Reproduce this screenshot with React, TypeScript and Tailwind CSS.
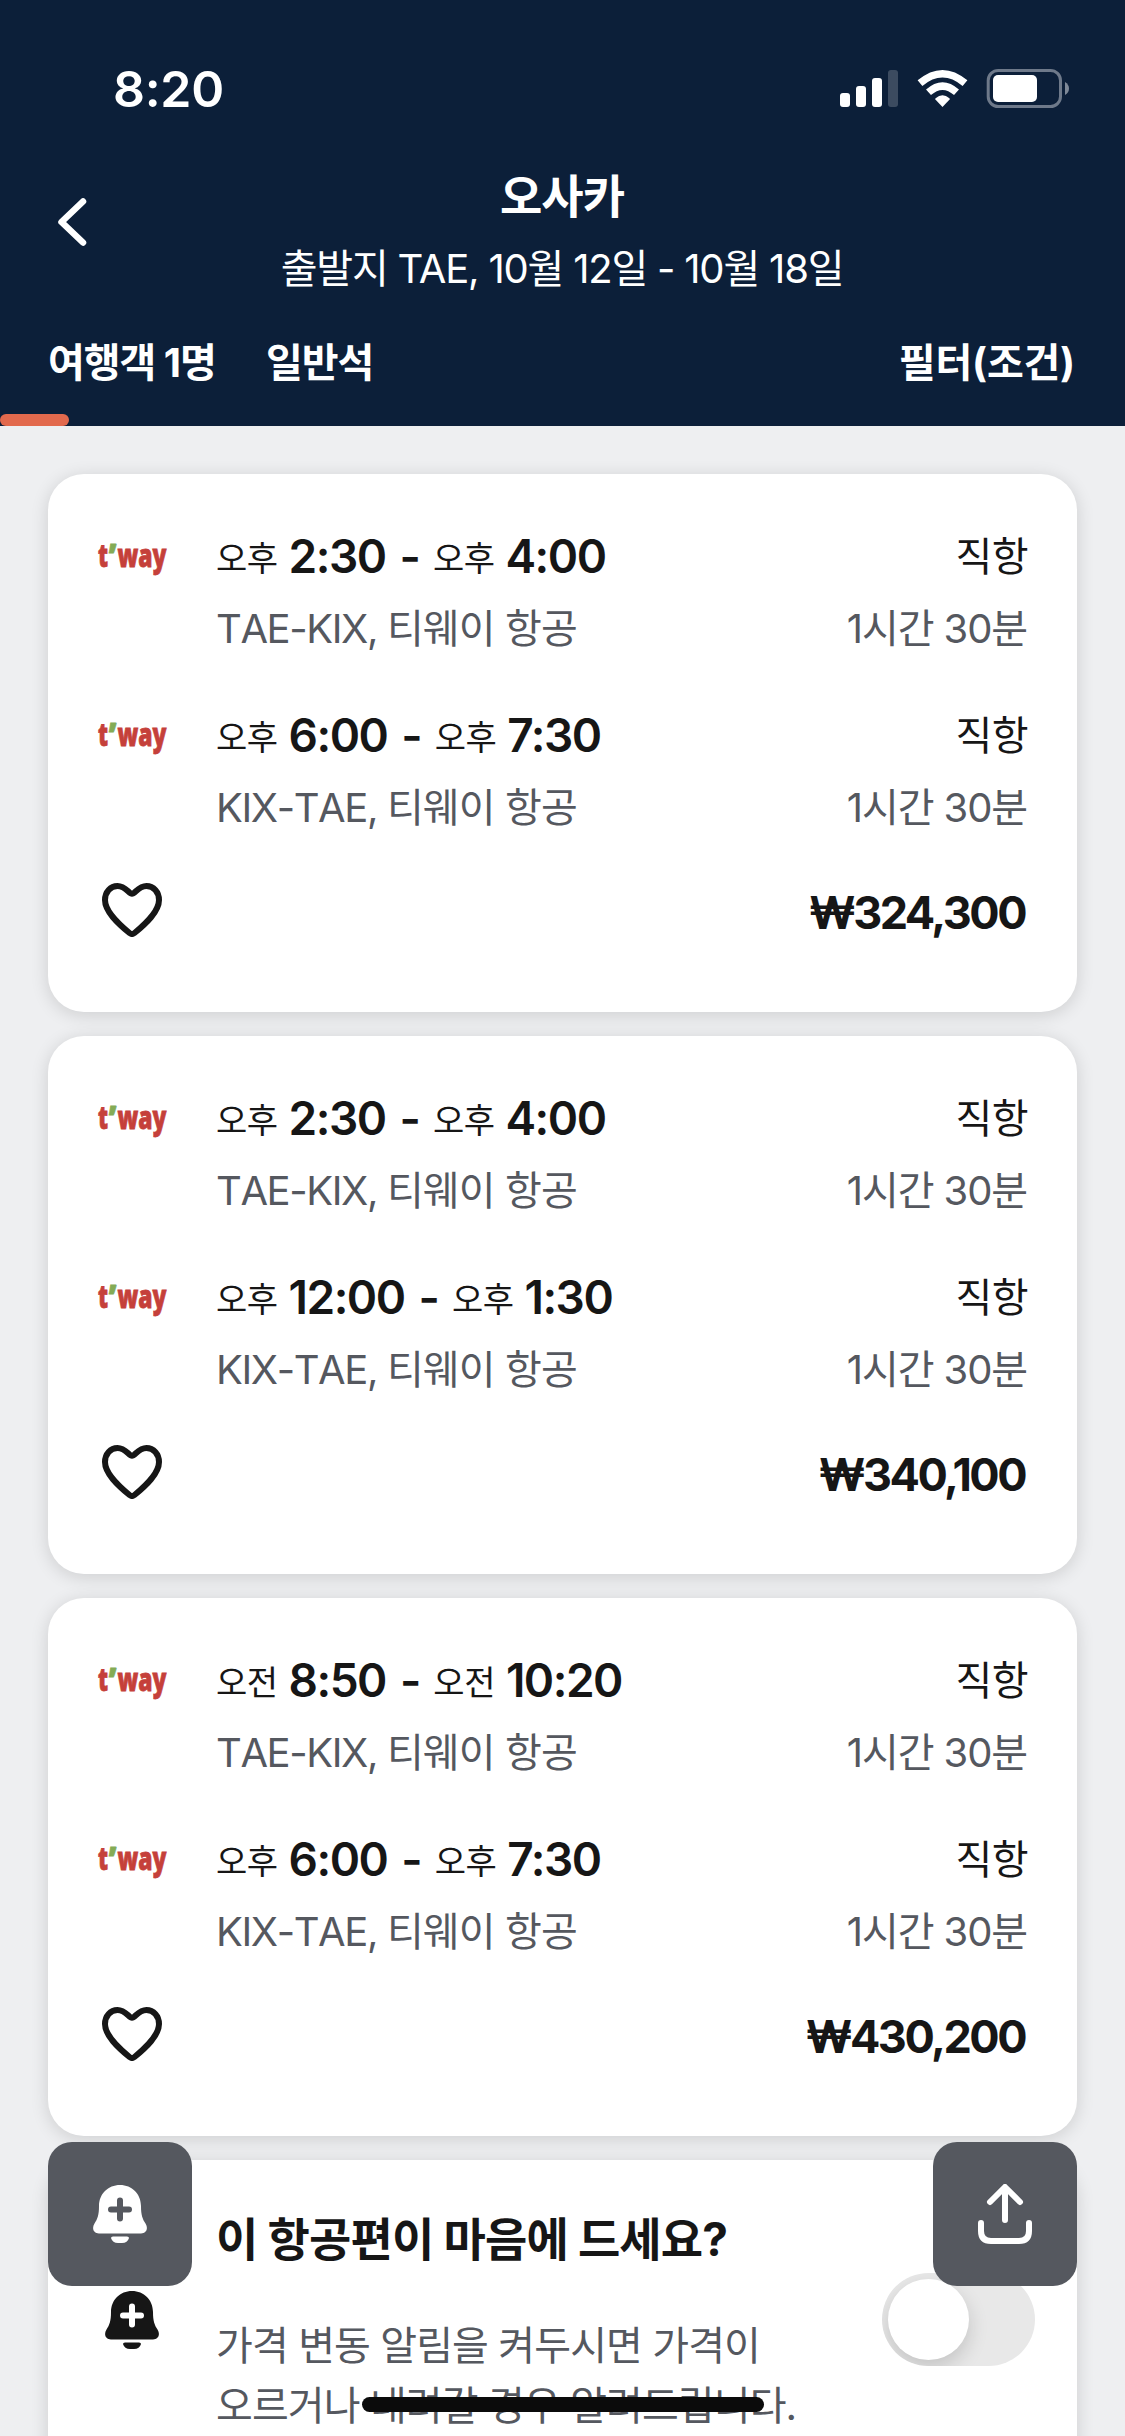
import React, { useState } from 'react';

interface FlightTime {
  period: string;
  time: string;
}

interface Leg {
  depart: FlightTime;
  arrive: FlightTime;
  route: string;
  airline: string;
  stops: string;
  duration: string;
}

interface Flight {
  id: number;
  legs: Leg[];
  price: string;
}

const makeLeg = (route: string, depart: FlightTime, arrive: FlightTime): Leg => ({
  depart,
  arrive,
  route,
  airline: '티웨이 항공',
  stops: '직항',
  duration: '1시간 30분',
});

const pm = (time: string): FlightTime => ({ period: '오후', time });
const am = (time: string): FlightTime => ({ period: '오전', time });

const flights: Flight[] = [
  {
    id: 1,
    legs: [makeLeg('TAE-KIX', pm('2:30'), pm('4:00')), makeLeg('KIX-TAE', pm('6:00'), pm('7:30'))],
    price: '₩324,300',
  },
  {
    id: 2,
    legs: [makeLeg('TAE-KIX', pm('2:30'), pm('4:00')), makeLeg('KIX-TAE', pm('12:00'), pm('1:30'))],
    price: '₩340,100',
  },
  {
    id: 3,
    legs: [makeLeg('TAE-KIX', am('8:50'), am('10:20')), makeLeg('KIX-TAE', pm('6:00'), pm('7:30'))],
    price: '₩430,200',
  },
];

function StatusBar() {
  return (
    <div className="flex h-[156px] items-start justify-between pl-[113px] pr-[56px]">
      <span className="mt-[59px] text-[50px] leading-[60px] font-semibold tracking-[-0.300px]">8:20</span>
      <svg className="mt-[68px]" width="230" height="42" viewBox="839 68 230 42" fill="none">
        <g fill="#fff">
          <rect x="840" y="93" width="10" height="14" rx="3" />
          <rect x="856" y="86" width="10" height="21" rx="3" />
          <rect x="872" y="78" width="10" height="29" rx="3" />
          <rect x="888" y="70" width="10" height="37" rx="3" opacity="0.2" />
          <path d="M942.5 107 L935.4 99.4 Q935 98.8 935.6 98.2 Q942.5 92.5 949.4 98.2 Q950 98.8 949.6 99.4 Z" />
        </g>
        <path d="M928.5 92.3 Q942.5 79.8 956.5 92.3" stroke="#fff" strokeWidth="7.4" />
        <path d="M920 83.2 Q942.5 64.3 965 83.2" stroke="#fff" strokeWidth="7.4" />
        <rect x="988.2" y="70.5" width="72.3" height="36" rx="10" stroke="#6e798a" strokeWidth="3" />
        <rect x="993" y="75" width="44" height="27" rx="5" fill="#fff" />
        <path d="M1065 82 Q1069 84.5 1069 88.5 Q1069 92.500 1065 95 Z" fill="#7f8998" />
      </svg>
    </div>
  );
}

function Header() {
  return (
    <header className="flex h-[426px] flex-col bg-[#0c1f39] text-white">
      <StatusBar />
      <div className="flex h-[156px]">
        <button className="mt-[40px] ml-[56px] h-[52px] w-[32px]">
          <svg width="32" height="52" viewBox="0 0 32 52" fill="none">
            <path d="M27 5.500 L5.500 26 L27 46.500" stroke="#fff" strokeWidth="6.500" strokeLinecap="round" strokeLinejoin="round" />
          </svg>
        </button>
        <div className="flex flex-1 flex-col items-center pr-[89px]">
          <h1 className="mt-[4px] text-[46px] leading-[72px] font-bold tracking-[-1px]">오사카</h1>
          <p className="mt-[1px] text-[40px] leading-[72px] tracking-[-1.200px]">출발지 TAE, 10월 12일 - 10월 18일</p>
        </div>
      </div>
      <div className="flex h-[102px] items-start px-[48px] text-[40px] leading-[72px] font-bold tracking-[-1px]">
        <span className="mt-[15px]">여행객 1명</span>
        <span className="mt-[15px] ml-[50px]">일반석</span>
        <span className="mt-[15px] mr-[2px] ml-auto tracking-[-0.200px]">필터(조건)</span>
      </div>
      <div className="h-[12px] w-[69px] rounded-full bg-[#e2694d]" />
    </header>
  );
}

function TwayLogo() {
  return (
    <svg className="h-[72px] w-[72px] shrink-0 overflow-visible" viewBox="0 0 72 72">
      <g fontFamily="Open Sans, sans-serif" fontWeight="800" fontSize="32" strokeWidth="0.8">
        <text x="2" y="46.500" fill="#c5403a" stroke="#c5403a" textLength="10" lengthAdjust="spacingAndGlyphs">t</text>
        <text x="12.500" y="47" fill="#84ab55" stroke="#84ab55" textLength="8" lengthAdjust="spacingAndGlyphs">’</text>
        <text x="21.500" y="46.500" fill="#c5403a" stroke="#c5403a" textLength="49" lengthAdjust="spacingAndGlyphs">way</text>
      </g>
    </svg>
  );
}

function Time({ value }: { value: FlightTime }) {
  return (
    <>
      <span className="text-[34px] leading-[78px] tracking-[-0.500px]">{value.period}</span>
      <span className="ml-[11px] text-[46px] font-semibold tracking-[-1.500px]">{value.time}</span>
    </>
  );
}

function LegRow({ leg }: { leg: Leg }) {
  return (
    <div className="flex">
      <TwayLogo />
      <div className="ml-[48px] flex-1">
        <div className="flex h-[72px] items-start leading-[72px]">
          <Time value={leg.depart} />
          <span className="mr-[12px] ml-[14px] text-[46px] font-semibold">-</span>
          <Time value={leg.arrive} />
          <span className="mr-[1px] ml-auto text-[40px] leading-[73px] tracking-[-0.500px]">{leg.stops}</span>
        </div>
        <div className="flex h-[72px] justify-between text-[40px] leading-[73px] tracking-[-0.900px] text-[#55585f]">
          <span>
            <span className="tracking-[-1.400px] [font-kerning:none]">{leg.route}, </span>
            {leg.airline}
          </span>
          <span className="mr-[2px] tracking-[-1.100px]">{leg.duration}</span>
        </div>
      </div>
    </div>
  );
}

function FlightCard({ flight }: { flight: Flight }) {
  const [saved, setSaved] = useState(false);

  return (
    <article className="h-[538px] rounded-[36px] bg-white px-[48px] pt-[46px] shadow-[0_3px_18px_rgba(0,0,0,0.14)]">
      <div className="flex flex-col gap-[35px]">
        {flight.legs.map((leg, i) => (
          <LegRow key={i} leg={leg} />
        ))}
      </div>
      <div className="mt-[33px] flex h-[72px] items-center justify-between">
        <button onClick={() => setSaved(!saved)} className="ml-[6px] -mt-[5px]">
          <svg width="60" height="54" viewBox="0 0 60 54" fill={saved ? '#161616' : 'none'}>
            <path
              d="M30 10.800 C27 10.800 23.500 3 15.500 3 C8.500 3 3 9 3 17 C3 28.500 16 40.500 27.500 50 Q30 52 32.500 50 C44 40.500 57 28.500 57 17 C57 9 51.500 3 44.500 3 C36.500 3 33 10.800 30 10.800 Z"
              stroke="#161616"
              strokeWidth="6"
              strokeLinejoin="round"
            />
          </svg>
        </button>
        <span className="mr-[4px] text-[45px] leading-[73px] font-bold tracking-[-2.500px]">{flight.price}</span>
      </div>
    </article>
  );
}

function BellPlus({ color, plus }: { color: string; plus: string }) {
  return (
    <svg width="54" height="58" viewBox="0 0 54 58">
      <path
        d="M27 0 C15 0 6 9 6 21 C6 30 4.500 34 1.500 38.500 C-1.500 43.500 0.500 48.500 6 48.500 H48 C53.500 48.500 55.500 43.500 52.500 38.500 C49.500 34 48 30 48 21 C48 9 39 0 27 0 Z"
        fill={color}
      />
      <path d="M20 51.500 H34 Q36 51.500 36 53 Q34.500 58 29 58 H25 Q19.500 58 18 53 Q18 51.500 20 51.500 Z" fill={color} />
      <path d="M27 15.500 V33.500 M18 24.500 H36" stroke={plus} strokeWidth="6" strokeLinecap="round" />
    </svg>
  );
}

function PriceAlertCard() {
  return (
    <article className="flex h-[538px] rounded-t-[36px] bg-white pt-[44px] shadow-[0_3px_18px_rgba(0,0,0,0.14)]">
      <div className="mt-[87px] ml-[57px] w-[111px] shrink-0">
        <BellPlus color="#161616" plus="#fff" />
      </div>
      <div className="flex-1">
        <h2 className="-mt-[1px] text-[46px] leading-[72px] font-bold tracking-[-0.850px]">이 항공편이 마음에 드세요?</h2>
        <div className="relative mt-[41px] text-[40px] leading-[60px] tracking-[-0.900px] whitespace-nowrap text-[#55585f]">
          <p>가격 변동 알림을 켜두시면 가격이</p>
          <p>오르거나 내려갈 경우 알려드립니다.</p>
          <div className="absolute top-[81px] left-[146px] h-[15px] w-[402px] rounded-full bg-[#0b0b0b]" />
        </div>
      </div>
      <div className="mt-[69px] mr-[42px] h-[93px] w-[153px] overflow-hidden rounded-full bg-[#e8e8e8] p-[6px]">
        <div className="h-[81px] w-[81px] rounded-full bg-white shadow-[0_8px_20px_rgba(0,0,0,0.16)]" />
      </div>
    </article>
  );
}

function FloatingActions() {
  return (
    <div className="absolute top-[2142px] right-[48px] left-[48px] flex justify-between">
      <button className="flex h-[144px] w-[144px] items-center justify-center rounded-[24px] bg-[#55585f]">
        <BellPlus color="#fff" plus="#55585f" />
      </button>
      <button className="flex h-[144px] w-[144px] items-center justify-center rounded-[24px] bg-[#55585f]">
        <svg width="54" height="60" viewBox="0 0 54 60" fill="none" stroke="#fff" strokeWidth="6" strokeLinecap="round" strokeLinejoin="round">
          <path d="M27 36 V4 M12 18 L27 3 L42 18" />
          <path d="M3 39 V47 Q3 57 13 57 H41 Q51 57 51 47 V39" />
        </svg>
      </button>
    </div>
  );
}

export default function App() {
  return (
    <div className="relative h-[2436px] w-[1125px] overflow-hidden bg-[#eeeff1] font-['Inter','Noto_Sans_CJK_KR',sans-serif] text-[#161616]">
      <Header />
      <main className="flex flex-col gap-[24px] px-[48px] pt-[48px]">
        {flights.map((flight) => (
          <FlightCard key={flight.id} flight={flight} />
        ))}
        <PriceAlertCard />
      </main>
      <FloatingActions />
    </div>
  );
}
